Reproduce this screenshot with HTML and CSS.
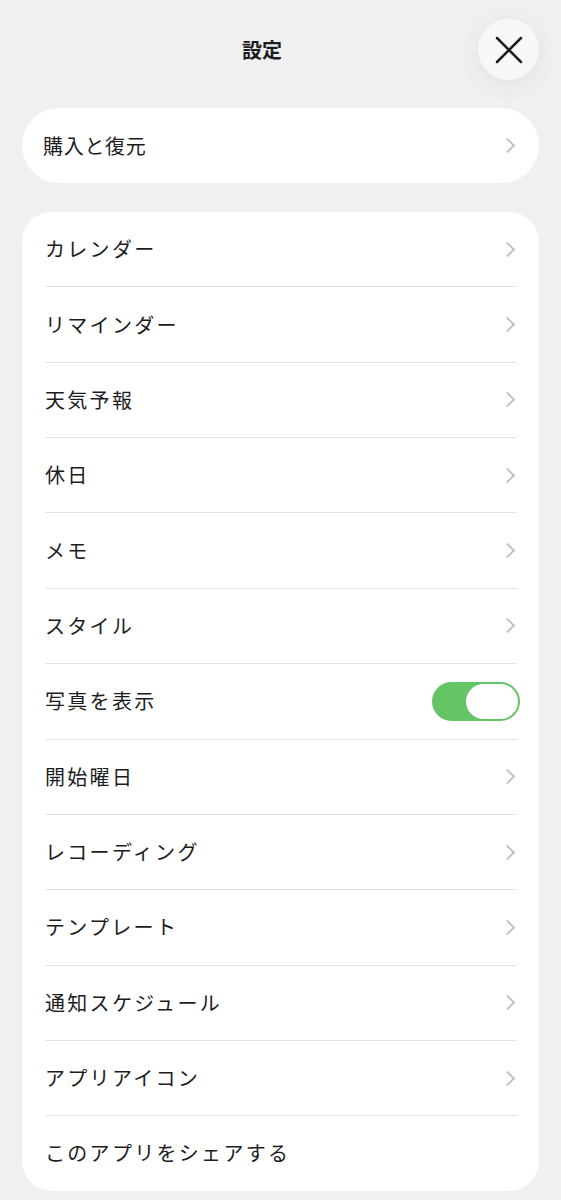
FILE: index.html
```html
<html>
<head>
<meta charset="UTF-8">
<link rel="stylesheet" href="styles.css">
</head>
<body>
<div id="header">
    <div class="title">設定</div>
    <button class="close_btn">
        <svg width="28" height="28" viewBox="0 0 28 28"><path d="M2 2 L26 26 M26 2 L2 26" stroke="#1c1c1e" stroke-width="2.5" stroke-linecap="round" fill="none"/></svg>
    </button>
</div>

<div class="card card_pill">
    <div class="row"><span class="label">購入と復元</span><span class="chev"></span></div>
</div>

<div class="card card_list">
    <div class="row"><span class="label">カレンダー</span><span class="chev"></span></div>
    <div class="row"><span class="label">リマインダー</span><span class="chev"></span></div>
    <div class="row"><span class="label">天気予報</span><span class="chev"></span></div>
    <div class="row"><span class="label">休日</span><span class="chev"></span></div>
    <div class="row"><span class="label">メモ</span><span class="chev"></span></div>
    <div class="row"><span class="label">スタイル</span><span class="chev"></span></div>
    <div class="row"><span class="label">写真を表示</span><span class="toggle on"><span class="knob"></span></span></div>
    <div class="row"><span class="label">開始曜日</span><span class="chev"></span></div>
    <div class="row"><span class="label">レコーディング</span><span class="chev"></span></div>
    <div class="row"><span class="label">テンプレート</span><span class="chev"></span></div>
    <div class="row"><span class="label">通知スケジュール</span><span class="chev"></span></div>
    <div class="row"><span class="label">アプリアイコン</span><span class="chev"></span></div>
    <div class="row"><span class="label">このアプリをシェアする</span></div>
</div>
</body>
</html>
```

FILE: styles.css
```css
body {
    margin: 0;
    background: #f0f0f3;
    font-family: "Noto Sans CJK JP", "Noto Sans", sans-serif;
    color: #1c1c1e;
    padding: 19px 22px 0 22px;
}

#header {
    position: relative;
    height: 61px;
    display: flex;
    justify-content: center;
    align-items: center;
    margin-bottom: 28px;
    padding-right: 37px;
}

.title {
    font-size: 20px;
    font-weight: 700;
}

.close_btn {
    position: absolute;
    right: 0;
    top: 0;
    width: 61px;
    height: 61px;
    border-radius: 50%;
    border: none;
    background: #f7f7f8;
    box-shadow: 0 4px 22px rgba(0, 0, 0, 0.07);
    display: flex;
    justify-content: center;
    align-items: center;
    padding: 0;
}

.card {
    background: #ffffff;
    overflow: hidden;
}

.card_pill {
    border-radius: 38px;
    margin-bottom: 29px;
}

.card_pill .row {
    height: 75px;
    margin-left: 21px;
}

.card_pill .label {
    letter-spacing: 0.7px;
}

.card_list {
    border-radius: 30px;
}

.row {
    display: flex;
    align-items: center;
    justify-content: space-between;
    height: 74.36px;
    margin: 0 22px 0 23px;
    font-size: 20px;
}

.card_list .row + .row {
    border-top: 1px solid #e3e3e6;
}

.label {
    line-height: 1;
    letter-spacing: 2.3px;
}

.chev {
    width: 9px;
    height: 9px;
    border-top: 2px solid #c4c4c8;
    border-right: 2px solid #c4c4c8;
    transform: rotate(45deg);
    margin-right: 4px;
}

.toggle {
    width: 88px;
    height: 39px;
    border-radius: 20px;
    background: #65c466;
    display: flex;
    align-items: center;
    justify-content: flex-end;
    padding: 0 2px;
    box-sizing: border-box;
    margin-right: -3px;
}

.knob {
    width: 52px;
    height: 35px;
    border-radius: 18px;
    background: #ffffff;
}
```
